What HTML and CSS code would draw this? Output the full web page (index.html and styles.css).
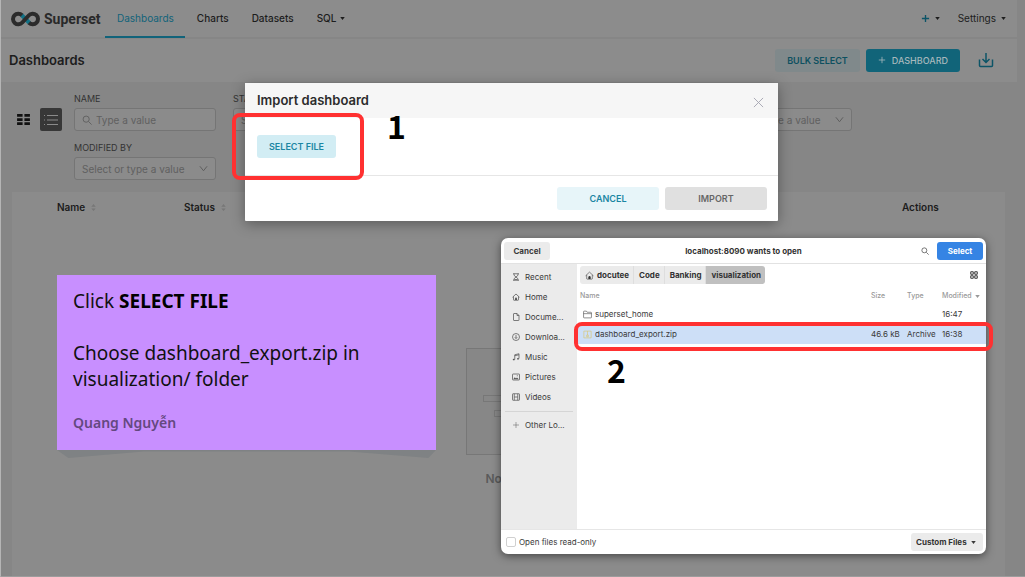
FILE: index.html
```html
<!DOCTYPE html>
<html lang="en">
<head>
<meta charset="utf-8">
<title>Import dashboard</title>
<link rel="stylesheet" href="styles.css">
</head>
<body>
<svg class="defs" aria-hidden="true">
  <symbol id="chevron" viewBox="0 0 10 10"><path d="M1 2.500 5 7.500 9 2.500"/></symbol>
  <symbol id="caret" viewBox="0 0 6 4"><path d="M0 0h6L3 4z"/></symbol>
  <symbol id="sorter" viewBox="0 0 5 8"><path d="M0 3 2.500 0 5 3zM0 5h5L2.500 8z"/></symbol>
  <symbol id="home" viewBox="0 0 16 16"><path d="M1 8.500 8 2l7 6.500M3 7v6.500q0 1 1 1h8q1 0 1-1V7"/><path class="solid" d="M6 14v-3a2 2 0 0 1 4 0v3z"/></symbol>
  <symbol id="lens" viewBox="0 0 12 12"><circle cx="5" cy="5" r="3.700"/><path d="m8 8 3.500 3.500"/></symbol>
</svg>
<div class="page">
  <header class="nav">
    <a class="brand" href="#">
      <svg class="brand-mark" viewBox="0 0 28 16" aria-hidden="true">
        <path class="mark-teal" d="m10 4 8 8"/>
        <path class="mark-dark" d="M10.500 4.200A5.300 5.300 0 1 0 10.800 11.500L17.200 4.500A5.300 5.300 0 1 1 17.500 11.800"/>
      </svg>
      <span>Superset</span>
    </a>
    <nav class="links">
      <a class="link active" href="#">Dashboards</a>
      <a class="link" href="#">Charts</a>
      <a class="link" href="#">Datasets</a>
      <a class="link" href="#">SQL <svg class="caret"><use href="#caret"/></svg></a>
    </nav>
    <div class="nav-right">
      <button class="plain" aria-label="New"><svg class="plus" viewBox="0 0 10 10"><path d="M5 1v8M1 5h8"/></svg><svg class="caret"><use href="#caret"/></svg></button>
      <button class="plain">Settings <svg class="caret"><use href="#caret"/></svg></button>
    </div>
  </header>
  <section class="titlebar">
    <h1>Dashboards</h1>
    <div class="actions">
      <button class="btn bulk">BULK SELECT</button>
      <button class="btn create"><svg class="btn-plus" viewBox="0 0 10 10" aria-hidden="true"><path d="M5 1v8M1 5h8"/></svg>DASHBOARD</button>
      <button class="plain download" aria-label="Import dashboards"><svg viewBox="0 0 16 16"><path d="M1.500 7.500v6q0 1 1 1h11q1 0 1-1v-6M8 1v9.500M4.500 7 8 10.500 11.500 7"/></svg></button>
    </div>
  </section>
  <section class="filters">
    <div class="views">
      <button class="view" aria-label="Card view"><svg viewBox="0 0 14 12"><path d="M0 0h6v3H0zM8 0h6v3H8zM0 4.500h6v3H0zM8 4.500h6v3H8zM0 9h6v3H0zM8 9h6v3H8z"/></svg></button>
      <button class="view chosen" aria-label="List view"><svg viewBox="0 0 16 12"><path d="M4 1.500h11M4 6h11M4 10.500h11M1 1.500h1M1 6h1M1 10.500h1"/></svg></button>
    </div>
    <div class="fields">
      <div class="field"><label for="f-name">NAME</label><div class="box"><svg class="lens"><use href="#lens"/></svg><input id="f-name" type="text" placeholder="Type a value"></div></div>
      <div class="field"><label for="f-status">STATUS</label><div class="box"><select id="f-status"><option>Select or type a value</option></select><svg class="chev"><use href="#chevron"/></svg></div></div>
      <div class="field"><label for="f-owner">OWNER</label><div class="box"><select id="f-owner"><option>Select or type a value</option></select><svg class="chev"><use href="#chevron"/></svg></div></div>
      <div class="field"><label for="f-fav">FAVORITE</label><div class="box"><select id="f-fav"><option>Select or type a value</option></select><svg class="chev"><use href="#chevron"/></svg></div></div>
      <div class="field"><label for="f-cert">CERTIFIED</label><div class="box"><select id="f-cert"><option>Select or type a value</option></select><svg class="chev"><use href="#chevron"/></svg></div></div>
      <div class="field"><label for="f-mod">MODIFIED BY</label><div class="box"><select id="f-mod"><option>Select or type a value</option></select><svg class="chev"><use href="#chevron"/></svg></div></div>
    </div>
  </section>
  <main class="panel">
    <table class="list">
      <thead><tr><th class="c-name">Name <svg class="sorter"><use href="#sorter"/></svg></th><th>Status <svg class="sorter"><use href="#sorter"/></svg></th><th class="c-act">Actions</th></tr></thead>
    </table>
    <div class="empty">
      <div class="empty-art"><span></span><span class="short"></span></div>
      <p>No Data</p>
    </div>
  </main>
</div>

<div class="modal" role="dialog" aria-labelledby="m-title">
  <div class="modal-head">
    <h2 id="m-title">Import dashboard</h2>
    <button class="plain close" aria-label="Close"><svg viewBox="0 0 12 12"><path d="m1 1 10 10M11 1 1 11"/></svg></button>
  </div>
  <div class="modal-body"><button class="btn pick">SELECT FILE</button></div>
  <div class="modal-foot"><button class="btn wide">CANCEL</button><button class="btn wide off" disabled>IMPORT</button></div>
</div>

<div class="chooser" role="dialog" aria-labelledby="c-title">
  <div class="ch-head">
    <button class="gbtn">Cancel</button>
    <h2 id="c-title">localhost:8090 wants to open</h2>
    <div class="ch-tools"><button class="plain" aria-label="Search"><svg class="find"><use href="#lens"/></svg></button><button class="gbtn primary">Select</button></div>
  </div>
  <div class="ch-main">
    <aside class="side">
      <a href="#"><svg viewBox="0 0 16 16"><path d="M2 1.500h12M2 14.500h12M4 1.500v3L8 8l4-3.500v-3M4 14.500v-3L8 8l4 3.500v3M5 13h6"/></svg>Recent</a>
      <a href="#"><svg><use href="#home"/></svg>Home</a>
      <a href="#"><svg viewBox="0 0 16 16"><path d="M4 1h6l4 4v9q0 1-1 1H4q-1 0-1-1V2q0-1 1-1M10 1v4h4"/></svg>Docume...</a>
      <a href="#"><svg viewBox="0 0 16 16"><circle cx="8" cy="8" r="7"/><path d="M8 4v7M5.500 8.500 8 11l2.500-2.500"/></svg>Downloa...</a>
      <a href="#"><svg viewBox="0 0 16 16"><path d="M5.500 13V3.500L14 1.500V11M5.500 5.500 14 3.500"/><ellipse class="solid" cx="3.500" cy="13" rx="2" ry="1.700"/><ellipse class="solid" cx="12" cy="11.500" rx="2" ry="1.700"/></svg>Music</a>
      <a href="#"><svg viewBox="0 0 16 16"><rect x="1" y="2" width="14" height="12" rx="1"/><path class="solid" d="m2.500 12.500 3-4 2.500 2.500 2-2 3.500 3.500z"/><circle class="solid" cx="10.500" cy="5.500" r="1"/></svg>Pictures</a>
      <a href="#"><svg viewBox="0 0 16 16"><rect x="1" y="1.500" width="14" height="13" rx="1"/><path d="M4.500 1.500v13M11.500 1.500v13M4.500 8h7"/></svg>Videos</a>
      <hr>
      <a href="#"><svg class="thin" viewBox="0 0 16 16"><path d="M8 2v12M2 8h12"/></svg>Other Lo...</a>
    </aside>
    <div class="files">
      <div class="pathrow">
        <div class="path"><button><svg><use href="#home"/></svg>docutee</button><button>Code</button><button>Banking</button><button class="here">visualization</button></div>
        <button class="plain" aria-label="Grid view"><svg class="gridicon" viewBox="0 0 16 16"><path d="M1.500 1.500h5v5h-5zM9.500 1.500h5v5h-5zM1.500 9.500h5v5h-5zM9.500 9.500h5v5h-5z"/></svg></button>
      </div>
      <table class="ftable">
        <colgroup><col><col class="w-size"><col class="w-type"><col class="w-mod"></colgroup>
        <thead><tr><th>Name</th><th>Size</th><th>Type</th><th>Modified <svg class="caret"><use href="#caret"/></svg></th></tr></thead>
        <tbody>
          <tr><td><svg class="ficon" viewBox="0 0 16 16"><path d="M1 13V3q0-1 1-1h4l1.500 2H14q1 0 1 1v8q0 1-1 1H2q-1 0-1-1M1 6.500h14"/></svg>superset_home</td><td></td><td></td><td>16:47</td></tr>
          <tr class="sel"><td><svg class="ficon zip" viewBox="0 0 16 16"><path d="M1.500 2h13v12h-13zM8 2v7M6.500 9h3v3h-3z"/></svg>dashboard_export.zip</td><td>46.6 kB</td><td>Archive</td><td>16:38</td></tr>
        </tbody>
      </table>
    </div>
  </div>
  <div class="ch-foot">
    <label class="ro"><input type="checkbox">Open files read-only</label>
    <div class="kind"><select aria-label="File type"><option>Custom Files</option></select><svg class="caret"><use href="#caret"/></svg></div>
  </div>
</div>

<div class="note">
  <p>Click <strong>SELECT FILE</strong></p>
  <p class="gap">Choose dashboard_export.zip in<br>visualization/ folder</p>
  <p class="author">Quang Nguyễn</p>
</div>
<div class="mark mark-one"></div>
<div class="mark mark-two"></div>
<div class="step step-one">1</div>
<div class="step step-two">2</div>
</body>
</html>
```
FILE: styles.css
```css
* { box-sizing: border-box; }
body { margin: 0; position: relative; min-height: 100vh; font-family: Inter, "Liberation Sans", sans-serif; font-size: 10px; color: #1d1d1d; background: #868686; overflow: hidden; }
h1, h2, p { margin: 0; }
a { color: inherit; text-decoration: none; }
button, input, select { font: inherit; color: inherit; margin: 0; }
svg { fill: none; stroke: currentColor; flex: none; }
.defs { position: absolute; width: 0; height: 0; }
.solid { fill: currentColor; stroke: none; }
.plain { display: flex; align-items: center; gap: 5px; border: 0; padding: 0; background: none; }
.caret { width: 5px; height: 3px; fill: currentColor; stroke: none; }

.page { display: flex; flex-direction: column; min-height: 100vh; border-left: 1px solid #b5b5b5; border-bottom: 1px solid #9c9c9c; }
.nav { display: flex; height: 39px; margin-right: 8px; background: #8c8c8c; border-bottom: 2px solid #868686; padding: 0 4px 0 10px; }
.brand { display: flex; align-items: center; gap: 4px; width: 94px; font-family: Roboto, sans-serif; font-size: 14px; font-weight: 700; color: #292929; }
.brand-mark { width: 29px; height: 16px; stroke-width: 4; }
.mark-dark { stroke: #2b2b2b; }
.mark-teal { stroke: #127286; }
.links { display: flex; font-weight: 500; }
.link { display: flex; align-items: center; gap: 4px; padding: 0 11px 0 12px; height: 38px; border-bottom: 2px solid transparent; }
.link.active { color: #11637a; border-color: #11637a; font-weight: 400; }
.nav-right { display: flex; gap: 18px; margin-left: auto; margin-right: 7px; padding-bottom: 1px; }
.plus { width: 9px; height: 9px; color: #0c5467; stroke-width: 1.5; }
.titlebar { display: flex; align-items: center; justify-content: space-between; height: 43px; margin-right: 8px; padding: 0 23px 1px 8px; background: #8c8c8c; }
h1 { font-size: 13px; font-weight: 600; }
.actions { display: flex; align-items: center; gap: 6px; }
.btn { height: 23px; border: 0; border-radius: 3px; font-size: 9px; font-weight: 600; padding: 0 12px; display: flex; align-items: center; justify-content: center; }
.bulk { background: #80898b; color: #0d5060; }
.create { background: #116479; color: #a6b8bc; font-weight: 500; gap: 6px; }
.btn-plus { width: 8px; height: 8px; }
.download { margin-left: 12px; color: #0c5467; }
.download svg { width: 16px; height: 16px; stroke-width: 1.5; }

.filters { display: flex; gap: 12px; padding: 11px 16px 12px 11px; }
.views { display: flex; gap: 6px; padding-top: 15px; }
.view { width: 22px; height: 23px; padding: 0; border: 0; border-radius: 2px; background: none; display: flex; align-items: center; justify-content: center; color: #111; }
.view svg { width: 13px; height: 11px; fill: currentColor; stroke: none; }
.view.chosen { background: #373737; color: #8a8a8a; }
.view.chosen svg { width: 16px; height: 12px; fill: none; stroke: currentColor; }
.fields { display: grid; grid-template-columns: repeat(5, 142px); gap: 11px 17px; }
.field label { display: block; font-size: 9px; line-height: 12px; color: #333; margin-bottom: 3px; }
.box { display: flex; align-items: center; height: 23px; border: 1px solid #757575; border-radius: 3px; background: #8b8b8b; padding: 0 7px; gap: 4px; color: #5a5a5a; }
.box input, .box select { flex: 1; min-width: 0; width: 100%; border: 0; padding: 0; background: none; appearance: none; outline: 0; font-size: 10px; color: #606060; }
.box input::placeholder { color: #606060; opacity: 1; }
.lens { width: 10px; height: 10px; }
.chev { width: 9px; height: 9px; }

.panel { flex: 1; margin: 0 20px 0 11px; background: #8b8b8b; }
.list { width: 100%; border-collapse: collapse; table-layout: fixed; }
.list th { height: 29px; padding: 0; text-align: left; font-weight: 600; color: #1c1c1c; }
.list .c-name { width: 172px; padding-left: 45px; }
.list .c-act { width: 103px; }
.sorter { width: 5px; height: 7px; fill: #777; stroke: none; margin-left: 3px; }
.empty { display: flex; flex-direction: column; align-items: center; padding-top: 127px; color: #5a5a5a; font-size: 12px; font-weight: 600; }
.empty-art { width: 86px; height: 107px; border: 1px solid #777; background: #878787; display: flex; flex-direction: column; align-items: center; gap: 8px; padding-top: 46px; margin-bottom: 16px; }
.empty-art span { width: 52px; height: 7px; border: 1px solid #777; }
.empty-art .short { width: 30px; }

.modal { position: absolute; left: 245px; top: 83px; width: 533px; background: #fff; box-shadow: 0 3px 14px rgba(0, 0, 0, .35); border-radius: 1px; }
.modal-head { display: flex; align-items: center; justify-content: space-between; height: 35px; padding: 0 14px 1px 12px; background: #f6f6f6; }
.modal-head h2 { font-size: 13px; font-weight: 600; color: #2c2c2c; }
.close { color: #a4a4b0; padding-top: 4px; }
.close svg { width: 11px; height: 11px; }
.modal-body { padding: 17px 12px; border-bottom: 1px solid #e6e6e6; }
.pick { background: #d2edf4; color: #1b86a3; }
.modal-foot { display: flex; justify-content: flex-end; gap: 6px; padding: 11px; }
.wide { width: 102px; background: #e7f5f9; color: #1b86a3; }
.wide.off { background: #e0e0e0; color: #666; }

.chooser { position: absolute; left: 501px; top: 238px; width: 485px; height: 316px; display: flex; flex-direction: column; background: #fff; border-radius: 7px; overflow: hidden; font-size: 8px; color: #3a3a3a; box-shadow: 0 2px 9px rgba(0, 0, 0, .5); }
.ch-head { display: grid; grid-template-columns: 1fr auto 1fr; align-items: center; height: 26px; padding: 0 3px; border-bottom: 1px solid #e2e2e2; }
.ch-head h2 { font-size: 8px; font-weight: 700; color: #333; }
.gbtn { justify-self: start; height: 18px; width: 46px; padding: 0; border: 0; border-radius: 3px; background: #ebebeb; font-weight: 700; }
.gbtn.primary { background: #3584e4; color: #fff; }
.ch-tools { display: flex; justify-content: flex-end; gap: 8px; }
.find { width: 8px; height: 8px; }
.ch-main { flex: 1; display: flex; min-height: 0; }
.side { width: 76px; background: #ebebeb; padding: 3px 4px; }
.side a { display: flex; align-items: center; gap: 5px; height: 20px; padding-left: 7px; }
.side svg { width: 8px; height: 8px; stroke-width: 1.5; color: #555; }
.side .thin { stroke-width: 1; }
.side hr { border: 0; border-top: 1px solid #d5d5d5; margin: 4px 0 3px; }
.files { flex: 1; }
.pathrow { display: flex; align-items: center; justify-content: space-between; padding: 2px 8px 3px 3px; }
.path { display: flex; border-radius: 3px; overflow: hidden; }
.path button { display: flex; align-items: center; gap: 3px; height: 18px; padding: 0 4px 0 5px; border: 0; border-right: 1px solid #dedede; background: #ebebeb; font-weight: 700; color: #333; }
.path svg { width: 9px; height: 9px; }
.path .here { background: #c0c0c0; border: 0; }
.gridicon { width: 8px; height: 8px; stroke-width: 2; }
.ftable { width: 100%; border-collapse: collapse; table-layout: fixed; }
.ftable th { height: 17px; padding: 0 0 0 3px; text-align: left; font-size: 7px; font-weight: 500; color: #999; }
.ftable td { height: 20px; padding: 0 0 0 3px; white-space: nowrap; }
.ftable td:first-child { padding-left: 6px; }
.ftable th .caret { margin-left: 2px; }
.ftable .sel { background: #cddff7; }
.w-size { width: 36px; }
.w-type { width: 35px; }
.w-mod { width: 47px; }
.ficon { width: 9px; height: 9px; margin-right: 3px; vertical-align: middle; }
.zip { color: #dcc25e; }
.ch-foot { display: flex; align-items: center; justify-content: space-between; height: 25px; padding: 0 3px 0 5px; border-top: 1px solid #e6e6e6; }
.ro { display: flex; align-items: center; gap: 3px; }
.ro input { appearance: none; width: 10px; height: 10px; border: 1px solid #d0d0d0; border-radius: 2px; }
.kind { display: flex; align-items: center; gap: 4px; height: 18px; padding: 0 7px 0 5px; border-radius: 3px; background: #ebebeb; font-weight: 700; }
.kind select { appearance: none; border: 0; padding: 0; background: none; color: #333; }

.note { position: absolute; left: 57px; top: 275px; width: 379px; padding: 13px 16px 16px; background: #c88fff; color: #111; font: 19px/26px "Noto Sans", sans-serif; }
.note::after { content: ""; position: absolute; left: 0; right: 0; top: 100%; height: 8px; background: #7f8284; clip-path: polygon(0 0, 100% 0, 98% 100%, 77% 20%, 23% 20%, 3% 100%); }
.note strong { color: #000; font-weight: 700; }
.note .gap { margin-top: 26px; }
.note .author { margin-top: 20px; font-size: 14px; line-height: 22px; font-weight: 600; color: #64487f; }
.mark { position: absolute; border: 4px solid #ff3131; border-radius: 8px; pointer-events: none; }
.mark-one { left: 232px; top: 113px; width: 132px; height: 67px; }
.mark-two { left: 574px; top: 322px; width: 419px; height: 29px; }
.step { position: absolute; font: 700 32px/32px "Noto Sans CJK SC", sans-serif; color: #000; }
.step-one { left: 387px; top: 109px; }
.step-two { left: 607px; top: 353px; }
```
